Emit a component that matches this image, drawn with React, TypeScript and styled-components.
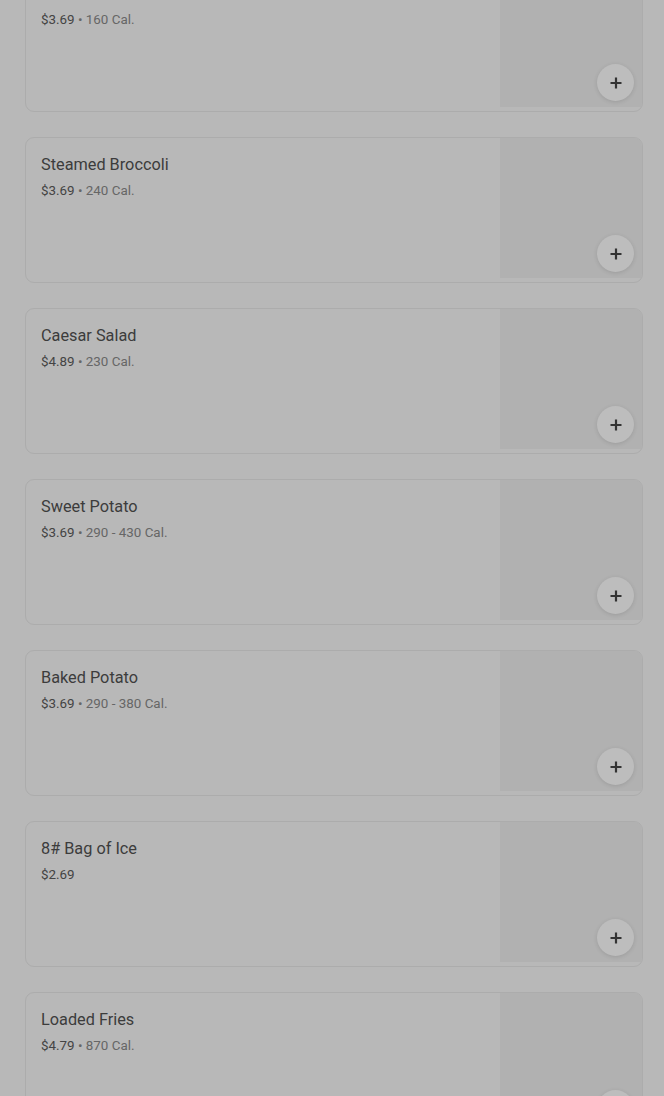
import styled, { createGlobalStyle } from 'styled-components';

interface IItem {
  name: string;
  price: string;
  cal?: string;
}

const items: IItem[] = [
  { name: 'Mashed Potatoes', price: '$3.69', cal: '160 Cal.' },
  { name: 'Steamed Broccoli', price: '$3.69', cal: '240 Cal.' },
  { name: 'Caesar Salad', price: '$4.89', cal: '230 Cal.' },
  { name: 'Sweet Potato', price: '$3.69', cal: '290 - 430 Cal.' },
  { name: 'Baked Potato', price: '$3.69', cal: '290 - 380 Cal.' },
  { name: '8# Bag of Ice', price: '$2.69' },
  { name: 'Loaded Fries', price: '$4.79', cal: '870 Cal.' },
];

const GlobalStyle = createGlobalStyle`
  html, body {
    margin: 0;
    padding: 0;
    background: #b8b8b8;
    font-family: Roboto, "Liberation Sans", sans-serif;
    overflow: hidden;
  }
`;

const List = styled.div`
  display: flex;
  flex-direction: column;
  gap: 25px;
  padding: 0 21px 0 25px;
  margin-top: -34px;
`;

const Card = styled.div`
  display: flex;
  height: 146px;
  box-sizing: border-box;
  border: 1px solid #acacac;
  border-radius: 9px;
  background: #b8b8b8;
  position: relative;
  overflow: hidden;
`;

const Info = styled.div`
  flex: 1;
  padding: 16px 15px;
`;

const Name = styled.div`
  font-size: 16.3px;
  color: #3c3c3c;
  line-height: 22px;
  margin-bottom: 6px;
`;

const Meta = styled.div`
  font-size: 13.4px;
  line-height: 18px;
  color: #444;
`;

const Cal = styled.span`
  color: #666;
`;

const Photo = styled.div`
  width: 142px;
  margin: 0 0 4px;
  background: #b1b1b1;
`;

const AddBtn = styled.button`
  position: absolute;
  right: 8px;
  bottom: 10px;
  width: 37px;
  height: 37px;
  border-radius: 50%;
  border: none;
  background: #bdbdbd;
  box-shadow: 0 1px 4px rgba(0, 0, 0, 0.12);
  display: flex;
  align-items: center;
  justify-content: center;
  padding: 0;
`;

export default function App() {
  return (
    <>
      <GlobalStyle />
      <List>
        {items.map((item) => (
          <Card key={item.name}>
            <Info>
              <Name>{item.name}</Name>
              <Meta>
                {item.price}
                {item.cal && <Cal> • {item.cal}</Cal>}
              </Meta>
            </Info>
            <Photo />
            <AddBtn>
              <svg width="12" height="12" viewBox="0 0 12 12">
                <path d="M6 0.5v11M0.5 6h11" stroke="#333" strokeWidth="2.2" />
              </svg>
            </AddBtn>
          </Card>
        ))}
      </List>
    </>
  );
}
